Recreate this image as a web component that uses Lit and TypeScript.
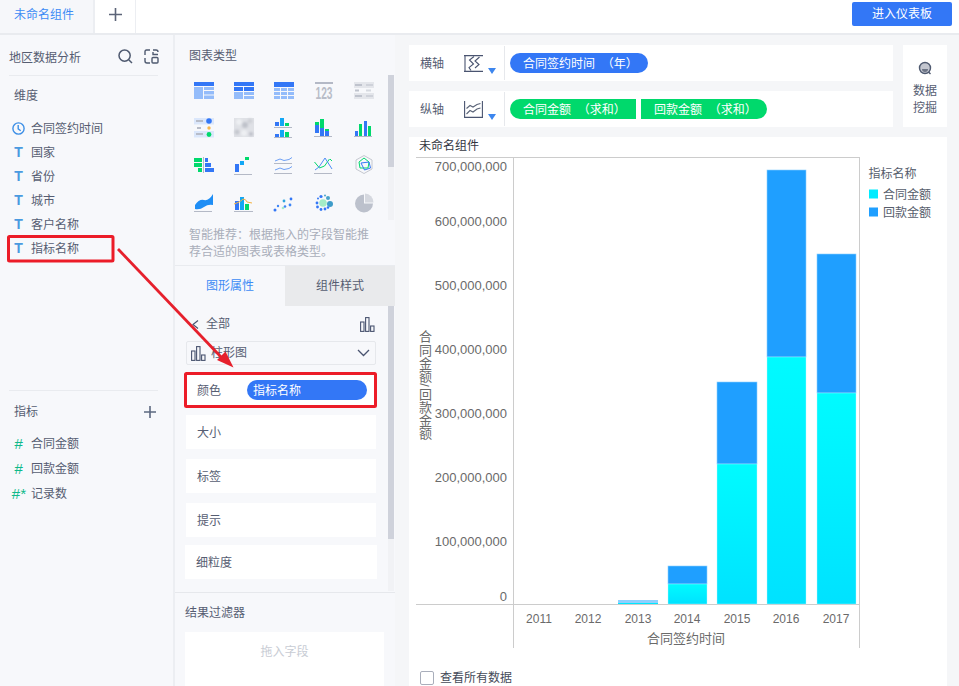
import { LitElement, html, css, svg } from "lit";
import { customElement } from "lit/decorators.js";

const B = "#3377f6", L = "#94bcfa", G = "#00d96c", C = "#12a7f5", GR = "#b4b9c6";

const r = (x: number, y: number, w: number, h: number, f: string) => svg`<rect x=${x} y=${y} width=${w} height=${h} fill=${f}></rect>`;
const c = (x: number, y: number, rad: number, f: string) => svg`<circle cx=${x} cy=${y} r=${rad} fill=${f}></circle>`;
const p = (d: string, s: string, w = 1, f = "none") => svg`<path d=${d} stroke=${s} stroke-width=${w} fill=${f}></path>`;

const chartIcons = [
  svg`${r(10, 10, 20, 4, B)}${r(10, 15, 9, 12, L)}${r(20, 15, 10, 3, L)}${r(20, 19, 10, 3.5, L)}${r(20, 23.5, 10, 3.5, L)}`,
  svg`${r(10, 10, 20, 4, B)}${r(10, 15, 9, 4, B)}${r(20, 15, 10, 4, B)}${r(10, 20, 9, 7, L)}${r(20, 20, 10, 3, L)}${r(20, 24, 10, 3, L)}`,
  svg`${r(10, 10, 20, 5, B)}${r(10, 16, 6, 3, L)}${r(17, 16, 6, 3, L)}${r(24, 16, 6, 3, L)}${r(10, 20, 6, 3, L)}${r(17, 20, 6, 3, L)}${r(24, 20, 6, 3, L)}${r(10, 24, 6, 3, L)}${r(17, 24, 6, 3, L)}${r(24, 24, 6, 3, L)}`,
  svg`${r(11, 10, 18, 2, GR)}<text x="20" y="26.500" text-anchor="middle" textLength="17" lengthAdjust="spacingAndGlyphs" class="num">123</text>`,
  svg`${r(10, 10, 20, 6, "#e4e6eb")}${r(10, 21, 20, 6, "#e4e6eb")}${r(11, 12, 7, 2, "#bfc3cd")}${r(11, 17.500, 4, 2, "#bfc3cd")}${r(11, 23, 7, 2, "#bfc3cd")}${r(22, 12, 7, 2, "#cfd2da")}${r(22, 17.500, 5, 2, "#d6d9e0")}${r(22, 23, 7, 2, "#cfd2da")}`,
  svg`${r(10, 8, 20, 6.500, "#dbe7fb")}${r(10, 21, 20, 6.500, "#dbe7fb")}${r(12, 10, 7, 2, "#b7bcc8")}${r(13, 17, 4, 2, "#b7bcc8")}${r(12, 23, 7, 2, "#b7bcc8")}${c(25, 11, 2.800, B)}${c(25, 18, 1.700, "#f8b84e")}${c(25, 24.500, 2.400, G)}`,
  svg`${r(10, 8, 20, 19, "#dfe1e6")}<g filter="url(#soft)">${c(15, 12, 3, "#eef0f3")}${c(21, 15, 3, "#bfc2ca")}${c(26, 11, 2.500, "#cfd1d7")}${c(13, 22, 2.500, "#c4c7ce")}${c(20, 23, 3, "#eef0f3")}${c(27, 24, 2, "#bcbfc8")}</g>`,
  svg`${r(11, 12, 4, 4, B)}${r(16, 8, 4, 8, C)}${r(21, 13, 4, 3, G)}${r(10, 17, 18, 1, GR)}${r(11, 24, 4, 3, B)}${r(16, 20, 4, 7, C)}${r(21, 22, 4, 5, G)}${r(10, 27, 18, 1, GR)}`,
  svg`${r(11, 15, 4, 8, B)}${r(11, 12, 4, 3, G)}${r(16, 18, 4, 8, B)}${r(16, 9, 4, 9, G)}${r(21, 21, 4, 5, B)}${r(21, 19, 4, 2, G)}${r(10, 26, 18, 1, GR)}`,
  svg`${r(11, 21, 3, 5, B)}${r(15, 14, 3, 12, G)}${r(20, 11, 3, 15, B)}${r(24, 16, 3, 10, G)}${r(10, 26, 18, 1, GR)}`,
  svg`${r(10, 10, 8, 4, G)}${r(10, 15, 8, 4, G)}${r(14, 20, 4, 4, G)}${r(19, 9, 1, 16, GR)}${r(21, 10, 3, 4, B)}${r(21, 15, 6, 4, B)}${r(21, 20, 9, 4, B)}`,
  svg`${r(11, 16, 4, 8, B)}${r(16, 13, 4, 4, C)}${r(21, 9, 4, 3, G)}${r(10, 26, 18, 1, GR)}`,
  svg`${p("M11 13 l5 -2 l4 1.500 l5 -1 l3 -2", "#6ea0f5")}${r(10, 15, 18, 1, GR)}${p("M11 22 l5 -2 l4 1.500 l5 -1 l3 -2", "#6ea0f5")}${r(10, 25, 18, 1, GR)}`,
  svg`${p("M10.500 14 l5 6 l5 -2 l5 -7 ", G)}${p("M11 22 l4 -3 l6 -9 l7 11", "#4d8cf6")}${p("M26 11 l2 2", G)}${r(10, 25, 18, 1, GR)}`,
  svg`${p("M20 7.500 l8 4.500 v9 l-8 4.500 l-8 -4.500 v-9 z", "#c5c8d0")}${p("M20 10 l5 4 l-1 6 h-8 l-1 -6 z", G)}${p("M17 15 l8 -1 l1.500 6 l-6 2 z", B)}`,
  svg`<path d="M11 19 q4 -6 9 -5 t9 -6 v11 q-5 -1 -9 2 t-9 2 z" fill="#1f8ef5"></path>${r(10, 25, 18, 1, GR)}`,
  svg`${r(11, 15, 4, 9, B)}${r(16, 11, 4, 13, C)}${r(21, 18, 4, 6, G)}${p("M10 18 q3 -1 5 -2 t4 -3 q3 0 4 3 l5 1", "#f5b342")}${r(10, 25, 19, 1, GR)}`,
  svg`${c(11, 24, 1.500, B)}${c(14, 20, 1.200, "#3f86f6")}${c(19, 22, 1.300, "#a5ecc8")}${c(21, 20.500, 1.300, "#3f86f6")}${c(20, 15, 1.400, "#2fa5dd")}${c(27, 13, 1.400, B)}${c(26, 19, 1.400, "#3f86f6")}`,
  svg`${c(19, 17, 3.800, "#a3ecc7")}${c(13, 17, 1.400, B)}${c(13.500, 21, 1.400, B)}${c(17, 23.500, 1.400, B)}${c(21, 23, 1.400, B)}${c(24, 21.500, 1.300, B)}${c(26, 18, 3, "#3e9cc9")}${c(24, 12, 2, "#49a4c9")}${c(17, 10.500, 1.600, B)}${c(21, 9.500, 1, "#49a4c9")}${c(14, 12.500, 1, B)}`,
  svg`<path d="M20 8.500 v9 h9 a9 9 0 1 1 -9 -9 z" fill="#bcc1cc"></path><path d="M21 7.500 a9 9 0 0 1 8.500 9 h-8.500 z" fill="#d5d8df"></path>`,
];

@customElement("app-root")
export class AppRoot extends LitElement {
  static styles = css`
    :host { display: block; width: 959px; height: 686px; position: relative; overflow: hidden; background: #fff;
      font: 12px/17px "Liberation Sans", "Noto Sans CJK SC", sans-serif; color: #565d72; }
    * { box-sizing: border-box; }
    .top { height: 35px; display: flex; background: #fff; border-bottom: 2px solid #e9ebef; align-items: stretch; }
    .tab1 { width: 95px; background: #f6f7fa; border-right: 2px solid #eceef2; color: #3d8bf5; padding: 7px 0 0 14px; }
    .tab2 { width: 41px; border-right: 1px solid #eceef2; display: flex; align-items: center; justify-content: center; padding-bottom: 4px; }
    .top-sp { flex: 1; }
    .enter { width: 100px; height: 24px; margin: 2px 7px 0 0; border-radius: 2px; background: #3377f6; color: #fff; display: flex; align-items: center; justify-content: center; }
    .body { display: grid; grid-template-columns: 175px 220px 1fr; height: 651px; }
    .left { background: #f7f8fb; border-right: 2px solid #eceef2; }
    .l-head { height: 41px; margin: 0 15px 0 9px; border-bottom: 1px solid #e9ebef; display: flex; align-items: center; justify-content: space-between; padding-top: 7px; }
    .l-icons { display: flex; gap: 11px; margin-bottom: 5px; margin-right: -1px; }
    .dims { height: 314px; }
    .sec { padding: 12px 0 0 14px; height: 40px; }
    .item { height: 24px; display: flex; align-items: center; padding: 2px 0 0 12px; gap: 6px; }
    .ic { width: 13px; height: 14px; display: flex; justify-content: center; align-items: center; flex: none; margin-top: -2px; }
    .t { color: #4a9ae0; font-weight: 700; font-size: 14px; }
    .h { color: #0fb98a; font-style: italic; font-size: 15px; }
    .meas { margin: 0 15px 0 9px; border-top: 1px solid #e9ebef; height: 41px; display: flex; align-items: center; justify-content: space-between; padding: 2px 2px 0 5px; }
    .item.m { height: 25px; }
    .center { background: #f7f8fb; display: flex; flex-direction: column; position: relative; }
    .types { height: 230px; position: relative; }
    .types-t { height: 37px; padding: 13px 0 0 14px; }
    .grid { display: grid; grid-template-columns: repeat(5, 40px); grid-auto-rows: 38px; margin-left: 9px; height: 155px; }
    .grid svg { display: block; width: 40px; height: 38px; }
    .num { font: 700 16.500px "Liberation Sans Narrow", "Liberation Sans", sans-serif; fill: #b9bdc8; }
    .hint { margin: 0 0 0 14px; width: 190px; color: #a9aeba; }
    .bar { position: absolute; left: 213px; width: 6px; background: #f1f2f5; }
    .thumb { width: 100%; background: #cfd2db; }
    .tabs { display: flex; height: 41px; border-top: 1px solid #e9ebef; }
    .tab-a { width: 110px; color: #3d8bf5; display: flex; align-items: center; justify-content: center; padding-top: 1px; }
    .tab-b { flex: 1; background: #e9eaec; display: flex; align-items: center; justify-content: center; padding-top: 1px; }
    .props { height: 287px; border-bottom: 1px solid #e6e8ec; padding: 8px 0 0 11px; }
    .all { height: 20px; display: flex; align-items: center; width: 190px; padding: 1px 0 0 5px; gap: 6px; }
    .all svg:last-child { margin-left: auto; margin-right: 1px; }
    .sel { height: 24px; width: 190px; margin-top: 7px; border: 1px solid #e6e8ec; display: flex; align-items: center; padding: 0 5px 0 4px; gap: 5px; border-radius: 2px; }
    .sel svg:last-child { margin-left: auto; }
    .row { height: 34px; width: 190px; background: #fff; display: flex; align-items: center; padding: 2px 0 0 11px; margin-top: 10px; }
    .row.first { margin-top: 8px; }
    .row.wide { width: 192px; margin: 8px 0 0 -1px; }
    .pill-blue { background: #3377f6; color: #fff; height: 20px; width: 120px; border-radius: 10px; margin: -2px 0 0 26px; padding: 2px 0 0 6px; display: flex; align-items: center; }
    .filter { flex: 1; padding: 12px 0 0 10px; }
    .drop { background: #fff; width: 199px; height: 60px; margin-top: 10px; text-align: center; padding-top: 12px; color: #c8ccd4; }
    .main { background: #f5f6f8; padding: 10px 12px 0 14px; display: flex; flex-direction: column; }
    .axes { display: grid; grid-template-columns: 484px 44px; grid-template-rows: 36px 36px; gap: 10px; }
    .axis { background: #fff; display: flex; align-items: center; padding-left: 11px; }
    .axis-l { width: 44px; padding-top: 2px; }
    .axis-i { width: 19px; height: 17px; display: block; flex: none; }
    .tri { width: 0; height: 0; border: 4px solid transparent; border-top: 6px solid #3d86ee; border-bottom: 0; margin: 16px 0 0 5px; }
    .div { width: 1px; height: 34px; background: #e6e8ec; margin: 0 5px 0 8px; }
    .pill { height: 20px; color: #fff; display: flex; align-items: center; padding: 2px 0 0 13px; white-space: pre; }
    .pb { background: #3377f6; width: 138px; border-radius: 10px; }
    .pg { background: #00d96c; width: 126px; }
    .pg.a { border-radius: 10px 0 0 10px; margin-right: 5px; }
    .pg.b { border-radius: 0 10px 10px 0; }
    .mine { grid-row: 1 / 3; grid-column: 2; background: #fff; display: flex; flex-direction: column; align-items: center; padding-top: 16px; text-align: center; }
    .mine svg { margin-bottom: 8px; }
    .card { background: #fff; margin-top: 10px; flex: 1; }
    .card-t { height: 16px; padding: 1px 0 0 10px; color: #33363f; }
    .chart { display: block; width: 538px; height: 505px; }
    .chart text { font: 12px "Liberation Sans", "Noto Sans CJK SC", sans-serif; fill: #6a6a6a; }
    .chart text.y { font-size: 13px; text-anchor: end; }
    .chart text.x { text-anchor: middle; }
    .chart text.big { font-size: 13px; }
    .chart text.v { writing-mode: vertical-rl; font-size: 13px; letter-spacing: .3px; }
    .chart text.lg { fill: #565d6c; }
    .check { display: flex; align-items: center; gap: 6px; margin: 12px 0 0 11px; color: #444a58; }
    .box { width: 14px; height: 14px; border: 1px solid #a9aebb; border-radius: 2px; background: #fff; margin-bottom: 2px; }
    .over { position: absolute; left: 0; top: 0; width: 959px; height: 686px; pointer-events: none; }
  `;

  private plus(size: number, col: string) {
    const a = size / 2;
    return html`<svg width=${size} height=${size} viewBox="0 0 ${size} ${size}"><path d="M${a} 0V${size}M0 ${a}H${size}" stroke=${col} stroke-width="1.600" fill="none"/></svg>`;
  }

  private bars(col = "#4a5470") {
    return html`<svg width="15" height="15" viewBox="0 0 15 15" fill="none" stroke=${col} stroke-width="1.100"><rect x=".6" y="5" width="3.400" height="9.400"/><rect x="5.600" y=".6" width="3.400" height="13.800"/><rect x="10.600" y="9" width="3.400" height="5.400"/></svg>`;
  }

  private chart() {
    const yl: [string, number][] = [["700,000,000", 171], ["600,000,000", 226], ["500,000,000", 290], ["400,000,000", 354], ["300,000,000", 418], ["200,000,000", 482], ["100,000,000", 546], ["0", 601]];
    const xs: [string, number][] = [["2011", 539], ["2012", 588], ["2013", 638], ["2014", 687], ["2015", 737], ["2016", 786], ["2017", 836]];
    const bs = [[668, 39, 584, 566], [717, 40, 464, 382], [767, 39, 357, 170], [817, 39, 393, 254]];
    return html`<svg class="chart" viewBox="409 153 538 505">
      <defs><linearGradient id="cy" x1="0" y1="0" x2="0" y2="1"><stop offset="0" stop-color="#00fbff"/><stop offset="1" stop-color="#00e2ff"/></linearGradient></defs>
      <path d="M416 157.500H860M416 604.500H860M513.500 157V648M859.500 157V648" stroke="#ccc" fill="none"/>
      ${bs.map(([x, w, a, b]) => svg`
        <rect x=${x} y=${b} width=${w} height=${a - b} fill="#1f9fff" stroke="#8ccfff" stroke-width=".6"/>
        <rect x=${x} y=${a} width=${w} height=${604 - a} fill="url(#cy)" stroke="#b5f6ff" stroke-width=".4"/>`)}
      <rect x="618" y="600" width="40" height="3" fill="#8fd0ff"/><rect x="618" y="603" width="40" height="1" fill="#00e8ff"/>
      ${yl.map(([t, y]) => svg`<text class="y" x="507" y=${y}>${t}</text>`)}
      ${xs.map(([t, x]) => svg`<text class="x" x=${x} y="623">${t}</text>`)}
      <text class="x big" x="686" y="643">合同签约时间</text>
      <text class="v" x="424.500" y="330">合同金额/回款金额</text>
      <text class="lg" x="868.500" y="178">指标名称</text>
      <rect x="869" y="189.500" width="9" height="9" fill="#00ebff"/><text class="lg" x="883" y="199">合同金额</text>
      <rect x="869" y="207.500" width="9" height="9" fill="#1f9fff"/><text class="lg" x="883" y="217">回款金额</text>
    </svg>`;
  }

  render() {
    const dims = ["国家", "省份", "城市", "客户名称", "指标名称"];
    return html`
      <div class="top">
        <div class="tab1">未命名组件</div>
        <div class="tab2">${this.plus(13, "#5c6478")}</div>
        <div class="top-sp"></div>
        <div class="enter">进入仪表板</div>
      </div>
      <div class="body">
        <aside class="left">
          <div class="l-head">
            <span>地区数据分析</span>
            <span class="l-icons">
              <svg width="15" height="15" viewBox="0 0 15 15" fill="none" stroke="#4f5a70" stroke-width="1.500"><circle cx="6.600" cy="6.600" r="5.600"/><path d="M10.700 10.700L14 14"/></svg>
              <svg width="15" height="15" viewBox="0 0 15 15" fill="none" stroke="#4f5a70" stroke-width="1.400"><path d="M6 1H2.500Q1 1 1 2.500V6M9 1h3q2 0 2 2M1 9v3q0 2 2 2h3"/><rect x="8" y="8.500" width="6" height="5.500" rx="1"/><path d="M14 5.500H9V3"/></svg>
            </span>
          </div>
          <div class="dims">
            <div class="sec">维度</div>
            <div class="item">
              <span class="ic"><svg width="13" height="13" viewBox="0 0 13 13" fill="none" stroke="#3d8fe6" stroke-width="1.400"><circle cx="6.500" cy="6.500" r="5.600"/><path d="M6.200 3V6.800L8.700 8.700"/></svg></span>
              合同签约时间
            </div>
            ${dims.map((d) => html`<div class="item"><span class="ic t">T</span>${d}</div>`)}
          </div>
          <div class="meas"><span>指标</span>${this.plus(12, "#5c6880")}</div>
          <div class="item m"><span class="ic h">#</span>合同金额</div>
          <div class="item m"><span class="ic h">#</span>回款金额</div>
          <div class="item m"><span class="ic h">#*</span>记录数</div>
        </aside>

        <section class="center">
          <div class="types">
            <div class="types-t">图表类型</div>
            <div class="grid">
              ${chartIcons.map((i) => html`<svg viewBox="0 0 40 38">${i}</svg>`)}
            </div>
            <p class="hint">智能推荐：根据拖入的字段智能推荐合适的图表或表格类型。</p>
            <div class="bar" style="top:40px;height:145px"><div class="thumb" style="height:92px"></div></div>
          </div>
          <div class="tabs"><div class="tab-a">图形属性</div><div class="tab-b">组件样式</div></div>
          <div class="props">
            <div class="all">
              <svg width="9" height="9" viewBox="0 0 9 9" fill="none" stroke="#4a5470" stroke-width="1.200"><path d="M7 .5L2 4.500L7 8.500"/></svg>
              全部
              ${this.bars()}
            </div>
            <div class="sel">${this.bars()}柱形图
              <svg width="13" height="8" viewBox="0 0 13 8" fill="none" stroke="#4a5470" stroke-width="1.300"><path d="M1 1l5.500 5.500L12 1"/></svg>
            </div>
            <div class="row first">颜色<div class="pill-blue">指标名称</div></div>
            <div class="row first">大小</div>
            <div class="row">标签</div>
            <div class="row">提示</div>
            <div class="row wide">细粒度</div>
          </div>
          <div class="bar" style="top:271px;height:285px"><div class="thumb" style="height:233px"></div></div>
          <div class="filter">
            结果过滤器
            <div class="drop">拖入字段</div>
          </div>
        </section>

        <main class="main">
          <div class="axes">
            <div class="axis">
              <span class="axis-l">横轴</span>
              <svg class="axis-i" viewBox="0 0 19 17" fill="none" stroke="#4a5470" stroke-width="1.100"><path d="M0 .6H19M0 16.400H19M1 .6V16.400"/><path d="M10 1.500L5.500 5L9.500 9L5 12.500L7 15.500M15.500 2L11 6L15 9.500L11 13"/></svg>
              <span class="tri"></span>
              <span class="div"></span>
              <span class="pill pb">合同签约时间  （年）</span>
            </div>
            <div class="mine">
              <svg width="14" height="14" viewBox="0 0 14 14"><circle cx="7" cy="7" r="5.500" fill="#c3c6cf" stroke="#4f5a70" stroke-width="1.400"/><path d="M4 8a3 3 0 0 0 6 0z" fill="#6d7586"/><path d="M10.500 11l2 2" stroke="#4f5a70" stroke-width="1.400"/></svg>
              数据<br />挖掘
            </div>
            <div class="axis">
              <span class="axis-l">纵轴</span>
              <svg class="axis-i" viewBox="0 0 19 17" fill="none" stroke="#4a5470" stroke-width="1.100"><path d="M.6 0V16.400H19M18.400 0V16.400"/><path d="M2.500 7.500L6 4.500L9 6L13 3.500L16.500 2.500M2.500 13L6 9.500L9 11L13 8L16.500 7" stroke="#5b6478"/></svg>
              <span class="tri"></span>
              <span class="div"></span>
              <span class="pill pg a">合同金额  （求和）</span>
              <span class="pill pg b">回款金额  （求和）</span>
            </div>
          </div>
          <div class="card">
            <div class="card-t">未命名组件</div>
            ${this.chart()}
            <div class="check"><span class="box"></span>查看所有数据</div>
          </div>
        </main>
      </div>
      <svg class="over" viewBox="0 0 959 686">
        <defs><filter id="soft" x="-20%" y="-20%" width="140%" height="140%"><feGaussianBlur stdDeviation="1"/></filter></defs>
        <rect x="8.500" y="236.500" width="104.500" height="24.500" rx="1" fill="none" stroke="#ec1c28" stroke-width="3"/>
        <rect x="185.500" y="373.500" width="190" height="33" rx="1" fill="none" stroke="#ec1c28" stroke-width="3"/>
        <path d="M118 249L222 358" stroke="#e6202c" stroke-width="2.800" fill="none"/>
        <path d="M233.500 367.500L217 360L225.500 351.500Z" fill="#e6202c"/>
      </svg>
    `;
  }
}
